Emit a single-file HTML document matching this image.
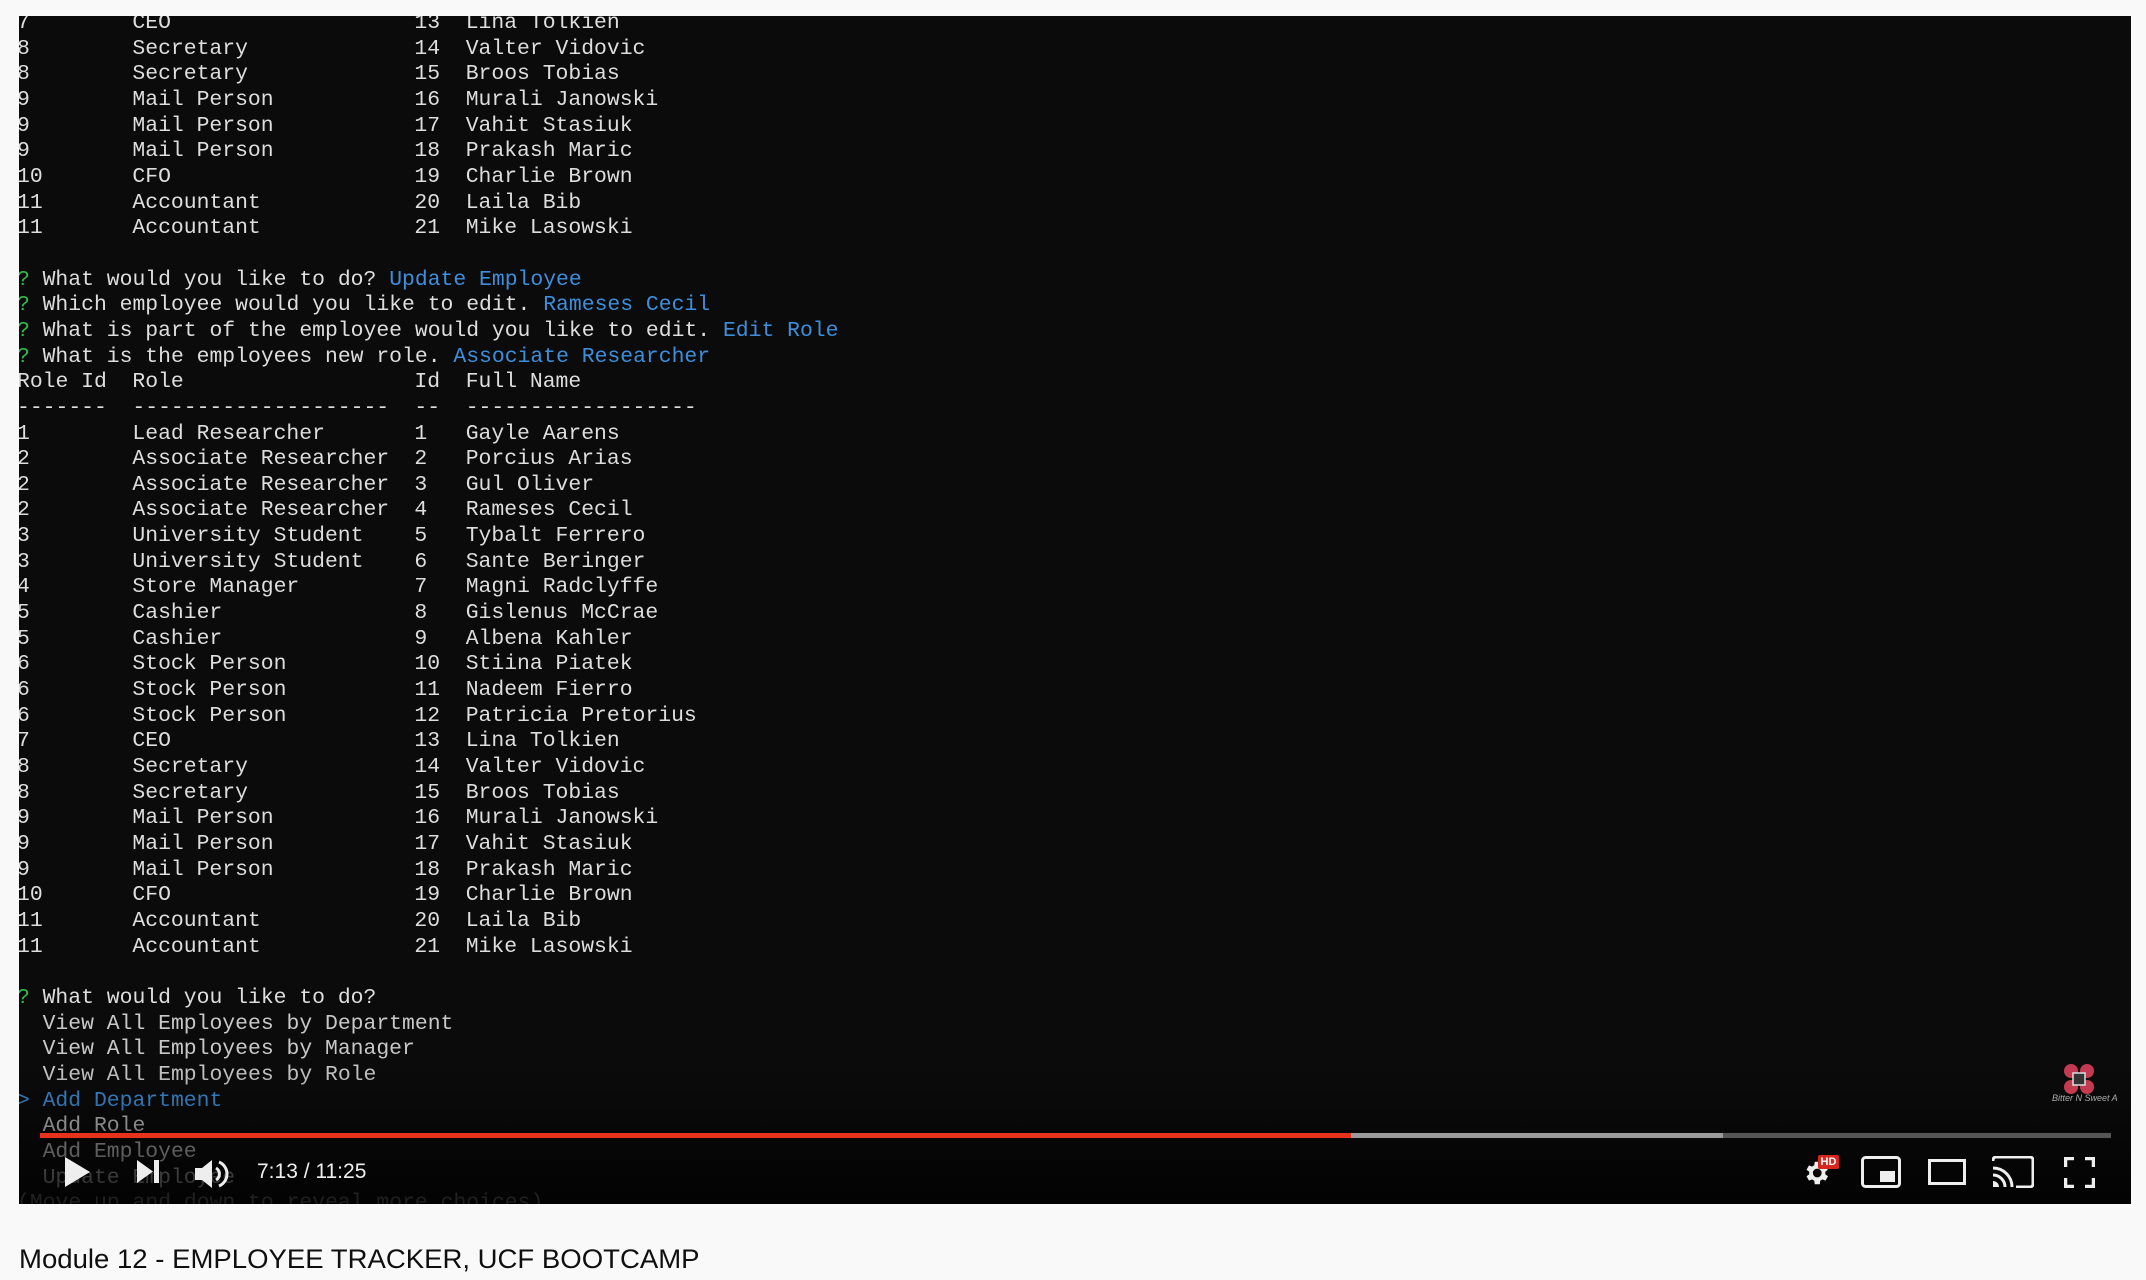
<!DOCTYPE html>
<html><head><meta charset="utf-8"><style>
html,body{margin:0;padding:0;background:#f9f9f9;width:2146px;height:1280px;overflow:hidden}
#v{position:absolute;left:19px;top:16px;width:2112px;height:1188px;background:#0b0b0b;overflow:hidden}
#t{position:absolute;left:-2px;top:-5px;width:1500px;font-family:"Liberation Mono",monospace;font-size:21.4px;color:#dedede}
.r{position:relative;height:25.66px;line-height:25.66px}
.r span{position:absolute;top:0;white-space:pre}
.c0{left:0}.c1{left:115.4px}.c2{left:397.4px}.c3{left:448.7px}.p{left:25.6px}
.g{color:#2fbf4a}.b{color:#3d8fdc;font-weight:normal}
#grad{position:absolute;left:0;right:0;bottom:0;height:140px;background:linear-gradient(rgba(0,0,0,0),rgba(0,0,0,0.75))}
#title{position:absolute;left:19px;top:1244px;font-family:"Liberation Sans",sans-serif;font-size:27px;color:#0f0f0f;transform-origin:0 0;transform:scaleX(1.02);white-space:nowrap}
svg{position:absolute}
</style></head><body>
<div id="v">
<div id="t"><div class="r"><span class="c0">7</span><span class="c1">CEO</span><span class="c2">13</span><span class="c3">Lina Tolkien</span></div><div class="r"><span class="c0">8</span><span class="c1">Secretary</span><span class="c2">14</span><span class="c3">Valter Vidovic</span></div><div class="r"><span class="c0">8</span><span class="c1">Secretary</span><span class="c2">15</span><span class="c3">Broos Tobias</span></div><div class="r"><span class="c0">9</span><span class="c1">Mail Person</span><span class="c2">16</span><span class="c3">Murali Janowski</span></div><div class="r"><span class="c0">9</span><span class="c1">Mail Person</span><span class="c2">17</span><span class="c3">Vahit Stasiuk</span></div><div class="r"><span class="c0">9</span><span class="c1">Mail Person</span><span class="c2">18</span><span class="c3">Prakash Maric</span></div><div class="r"><span class="c0">10</span><span class="c1">CFO</span><span class="c2">19</span><span class="c3">Charlie Brown</span></div><div class="r"><span class="c0">11</span><span class="c1">Accountant</span><span class="c2">20</span><span class="c3">Laila Bib</span></div><div class="r"><span class="c0">11</span><span class="c1">Accountant</span><span class="c2">21</span><span class="c3">Mike Lasowski</span></div><div class="r"></div><div class="r"><span class="c0 g">?</span><span class="p">What would you like to do? <b class="b">Update Employee</b></span></div><div class="r"><span class="c0 g">?</span><span class="p">Which employee would you like to edit. <b class="b">Rameses Cecil</b></span></div><div class="r"><span class="c0 g">?</span><span class="p">What is part of the employee would you like to edit. <b class="b">Edit Role</b></span></div><div class="r"><span class="c0 g">?</span><span class="p">What is the employees new role. <b class="b">Associate Researcher</b></span></div><div class="r"><span class="c0">Role Id</span><span class="c1">Role</span><span class="c2">Id</span><span class="c3">Full Name</span></div><div class="r"><span class="c0">-------</span><span class="c1">--------------------</span><span class="c2">--</span><span class="c3">------------------</span></div><div class="r"><span class="c0">1</span><span class="c1">Lead Researcher</span><span class="c2">1</span><span class="c3">Gayle Aarens</span></div><div class="r"><span class="c0">2</span><span class="c1">Associate Researcher</span><span class="c2">2</span><span class="c3">Porcius Arias</span></div><div class="r"><span class="c0">2</span><span class="c1">Associate Researcher</span><span class="c2">3</span><span class="c3">Gul Oliver</span></div><div class="r"><span class="c0">2</span><span class="c1">Associate Researcher</span><span class="c2">4</span><span class="c3">Rameses Cecil</span></div><div class="r"><span class="c0">3</span><span class="c1">University Student</span><span class="c2">5</span><span class="c3">Tybalt Ferrero</span></div><div class="r"><span class="c0">3</span><span class="c1">University Student</span><span class="c2">6</span><span class="c3">Sante Beringer</span></div><div class="r"><span class="c0">4</span><span class="c1">Store Manager</span><span class="c2">7</span><span class="c3">Magni Radclyffe</span></div><div class="r"><span class="c0">5</span><span class="c1">Cashier</span><span class="c2">8</span><span class="c3">Gislenus McCrae</span></div><div class="r"><span class="c0">5</span><span class="c1">Cashier</span><span class="c2">9</span><span class="c3">Albena Kahler</span></div><div class="r"><span class="c0">6</span><span class="c1">Stock Person</span><span class="c2">10</span><span class="c3">Stiina Piatek</span></div><div class="r"><span class="c0">6</span><span class="c1">Stock Person</span><span class="c2">11</span><span class="c3">Nadeem Fierro</span></div><div class="r"><span class="c0">6</span><span class="c1">Stock Person</span><span class="c2">12</span><span class="c3">Patricia Pretorius</span></div><div class="r"><span class="c0">7</span><span class="c1">CEO</span><span class="c2">13</span><span class="c3">Lina Tolkien</span></div><div class="r"><span class="c0">8</span><span class="c1">Secretary</span><span class="c2">14</span><span class="c3">Valter Vidovic</span></div><div class="r"><span class="c0">8</span><span class="c1">Secretary</span><span class="c2">15</span><span class="c3">Broos Tobias</span></div><div class="r"><span class="c0">9</span><span class="c1">Mail Person</span><span class="c2">16</span><span class="c3">Murali Janowski</span></div><div class="r"><span class="c0">9</span><span class="c1">Mail Person</span><span class="c2">17</span><span class="c3">Vahit Stasiuk</span></div><div class="r"><span class="c0">9</span><span class="c1">Mail Person</span><span class="c2">18</span><span class="c3">Prakash Maric</span></div><div class="r"><span class="c0">10</span><span class="c1">CFO</span><span class="c2">19</span><span class="c3">Charlie Brown</span></div><div class="r"><span class="c0">11</span><span class="c1">Accountant</span><span class="c2">20</span><span class="c3">Laila Bib</span></div><div class="r"><span class="c0">11</span><span class="c1">Accountant</span><span class="c2">21</span><span class="c3">Mike Lasowski</span></div><div class="r"></div><div class="r"><span class="c0 g">?</span><span class="p">What would you like to do?</span></div><div class="r" style="color:#c8c8c8"><span class="p">View All Employees by Department</span></div><div class="r" style="color:#c8c8c8"><span class="p">View All Employees by Manager</span></div><div class="r" style="color:#c8c8c8"><span class="p">View All Employees by Role</span></div><div class="r"><span class="c0 b">&gt;</span><span class="p b">Add Department</span></div><div class="r" style="color:#c8c8c8"><span class="p">Add Role</span></div><div class="r" style="color:#b0b0b0"><span class="p">Add Employee</span></div><div class="r" style="color:#909090"><span class="p">Update Employee</span></div><div class="r" style="color:#707070"><span class="c0">(Move up and down to reveal more choices)</span></div></div>
<div id="grad"></div>
<div style="position:absolute;left:21px;top:1117px;width:2071px;height:5px;background:#555"></div>
<div style="position:absolute;left:21px;top:1117px;width:1683px;height:5px;background:#9a9a9a"></div>
<div style="position:absolute;left:21px;top:1117px;width:1311px;height:5px;background:#e8321e"></div>
<svg style="left:2045px;top:1048px" width="30" height="30" viewBox="0 0 30 30"><g fill="#c43a50"><circle cx="7" cy="7" r="7"/><circle cx="23" cy="7" r="7"/><circle cx="7" cy="23" r="7"/><circle cx="23" cy="23" r="7"/></g><rect x="9" y="9" width="12" height="12" fill="#333" stroke="#ddd" stroke-width="1.5"/></svg>
<div style="position:absolute;left:2033px;top:1077px;font:italic 9px 'Liberation Sans',sans-serif;color:#aaa">Bitter N Sweet A</div>
<svg style="left:46px;top:1141px" width="26" height="30" viewBox="0 0 26 30"><path d="M0 0L25 15L0 30Z" fill="#eee"/></svg>
<svg style="left:118px;top:1144px" width="23" height="23" viewBox="0 0 23 23"><path d="M0 0L16 11.5L0 23Z" fill="#eee"/><rect x="17" y="0" width="5" height="23" fill="#eee"/></svg>
<svg style="left:176px;top:1144px" width="36" height="28" viewBox="0 0 36 28"><path d="M0 8h7l10-8v28l-10-8H0z" fill="#eee"/><path d="M21 8a7 7 0 0 1 0 12" stroke="#eee" stroke-width="3" fill="none"/><path d="M24 2a13 13 0 0 1 0 24" stroke="#eee" stroke-width="3" fill="none"/></svg>
<div style="position:absolute;left:238px;top:1144px;font:21px 'Liberation Sans',sans-serif;color:#eee">7:13 / 11:25</div>
<svg style="left:1781px;top:1142px" width="32" height="30" viewBox="0 0 24 24"><path fill="#eee" d="M19.4 13a7.8 7.8 0 0 0 0-2l2.1-1.6-2-3.5-2.5 1a7.3 7.3 0 0 0-1.7-1L15 3h-4l-.4 2.9a7.3 7.3 0 0 0-1.7 1l-2.5-1-2 3.5L6.6 11a7.8 7.8 0 0 0 0 2l-2.2 1.6 2 3.5 2.5-1a7.3 7.3 0 0 0 1.7 1L11 21h4l.4-2.9a7.3 7.3 0 0 0 1.7-1l2.5 1 2-3.5zM13 15.5a3.5 3.5 0 1 1 0-7 3.5 3.5 0 0 1 0 7z"/></svg>
<div style="position:absolute;left:1799px;top:1139px;width:21px;height:14px;background:#d9261c;border-radius:2px;font:bold 11px 'Liberation Sans',sans-serif;color:#fff;text-align:center;line-height:14px">HD</div>
<svg style="left:1842px;top:1140px" width="40" height="32" viewBox="0 0 40 32"><rect x="1.5" y="1.5" width="37" height="29" rx="3" fill="none" stroke="#eee" stroke-width="3"/><rect x="19" y="15" width="15" height="11" fill="#eee"/></svg>
<svg style="left:1909px;top:1143px" width="38" height="26" viewBox="0 0 38 26"><rect x="1.5" y="1.5" width="35" height="23" fill="none" stroke="#eee" stroke-width="3"/></svg>
<svg style="left:1973px;top:1140px" width="42" height="32" viewBox="0 0 42 32"><path d="M1 5V4a3 3 0 0 1 3-3h34a3 3 0 0 1 3 3v24a3 3 0 0 1-3 3H24" fill="none" stroke="#eee" stroke-width="3"/><path d="M1 12a19 19 0 0 1 19 19M1 19a12 12 0 0 1 12 12" fill="none" stroke="#eee" stroke-width="3"/><path d="M1 25a6 6 0 0 1 6 6H1z" fill="#eee"/></svg>
<svg style="left:2045px;top:1141px" width="31" height="31" viewBox="0 0 31 31"><path d="M1.5 10V1.5H10M21 1.5h8.5V10M29.5 21v8.5H21M10 29.5H1.5V21" fill="none" stroke="#eee" stroke-width="3.5"/></svg>
</div>
<div id="title">Module 12 - EMPLOYEE TRACKER, UCF BOOTCAMP</div>
</body></html>
